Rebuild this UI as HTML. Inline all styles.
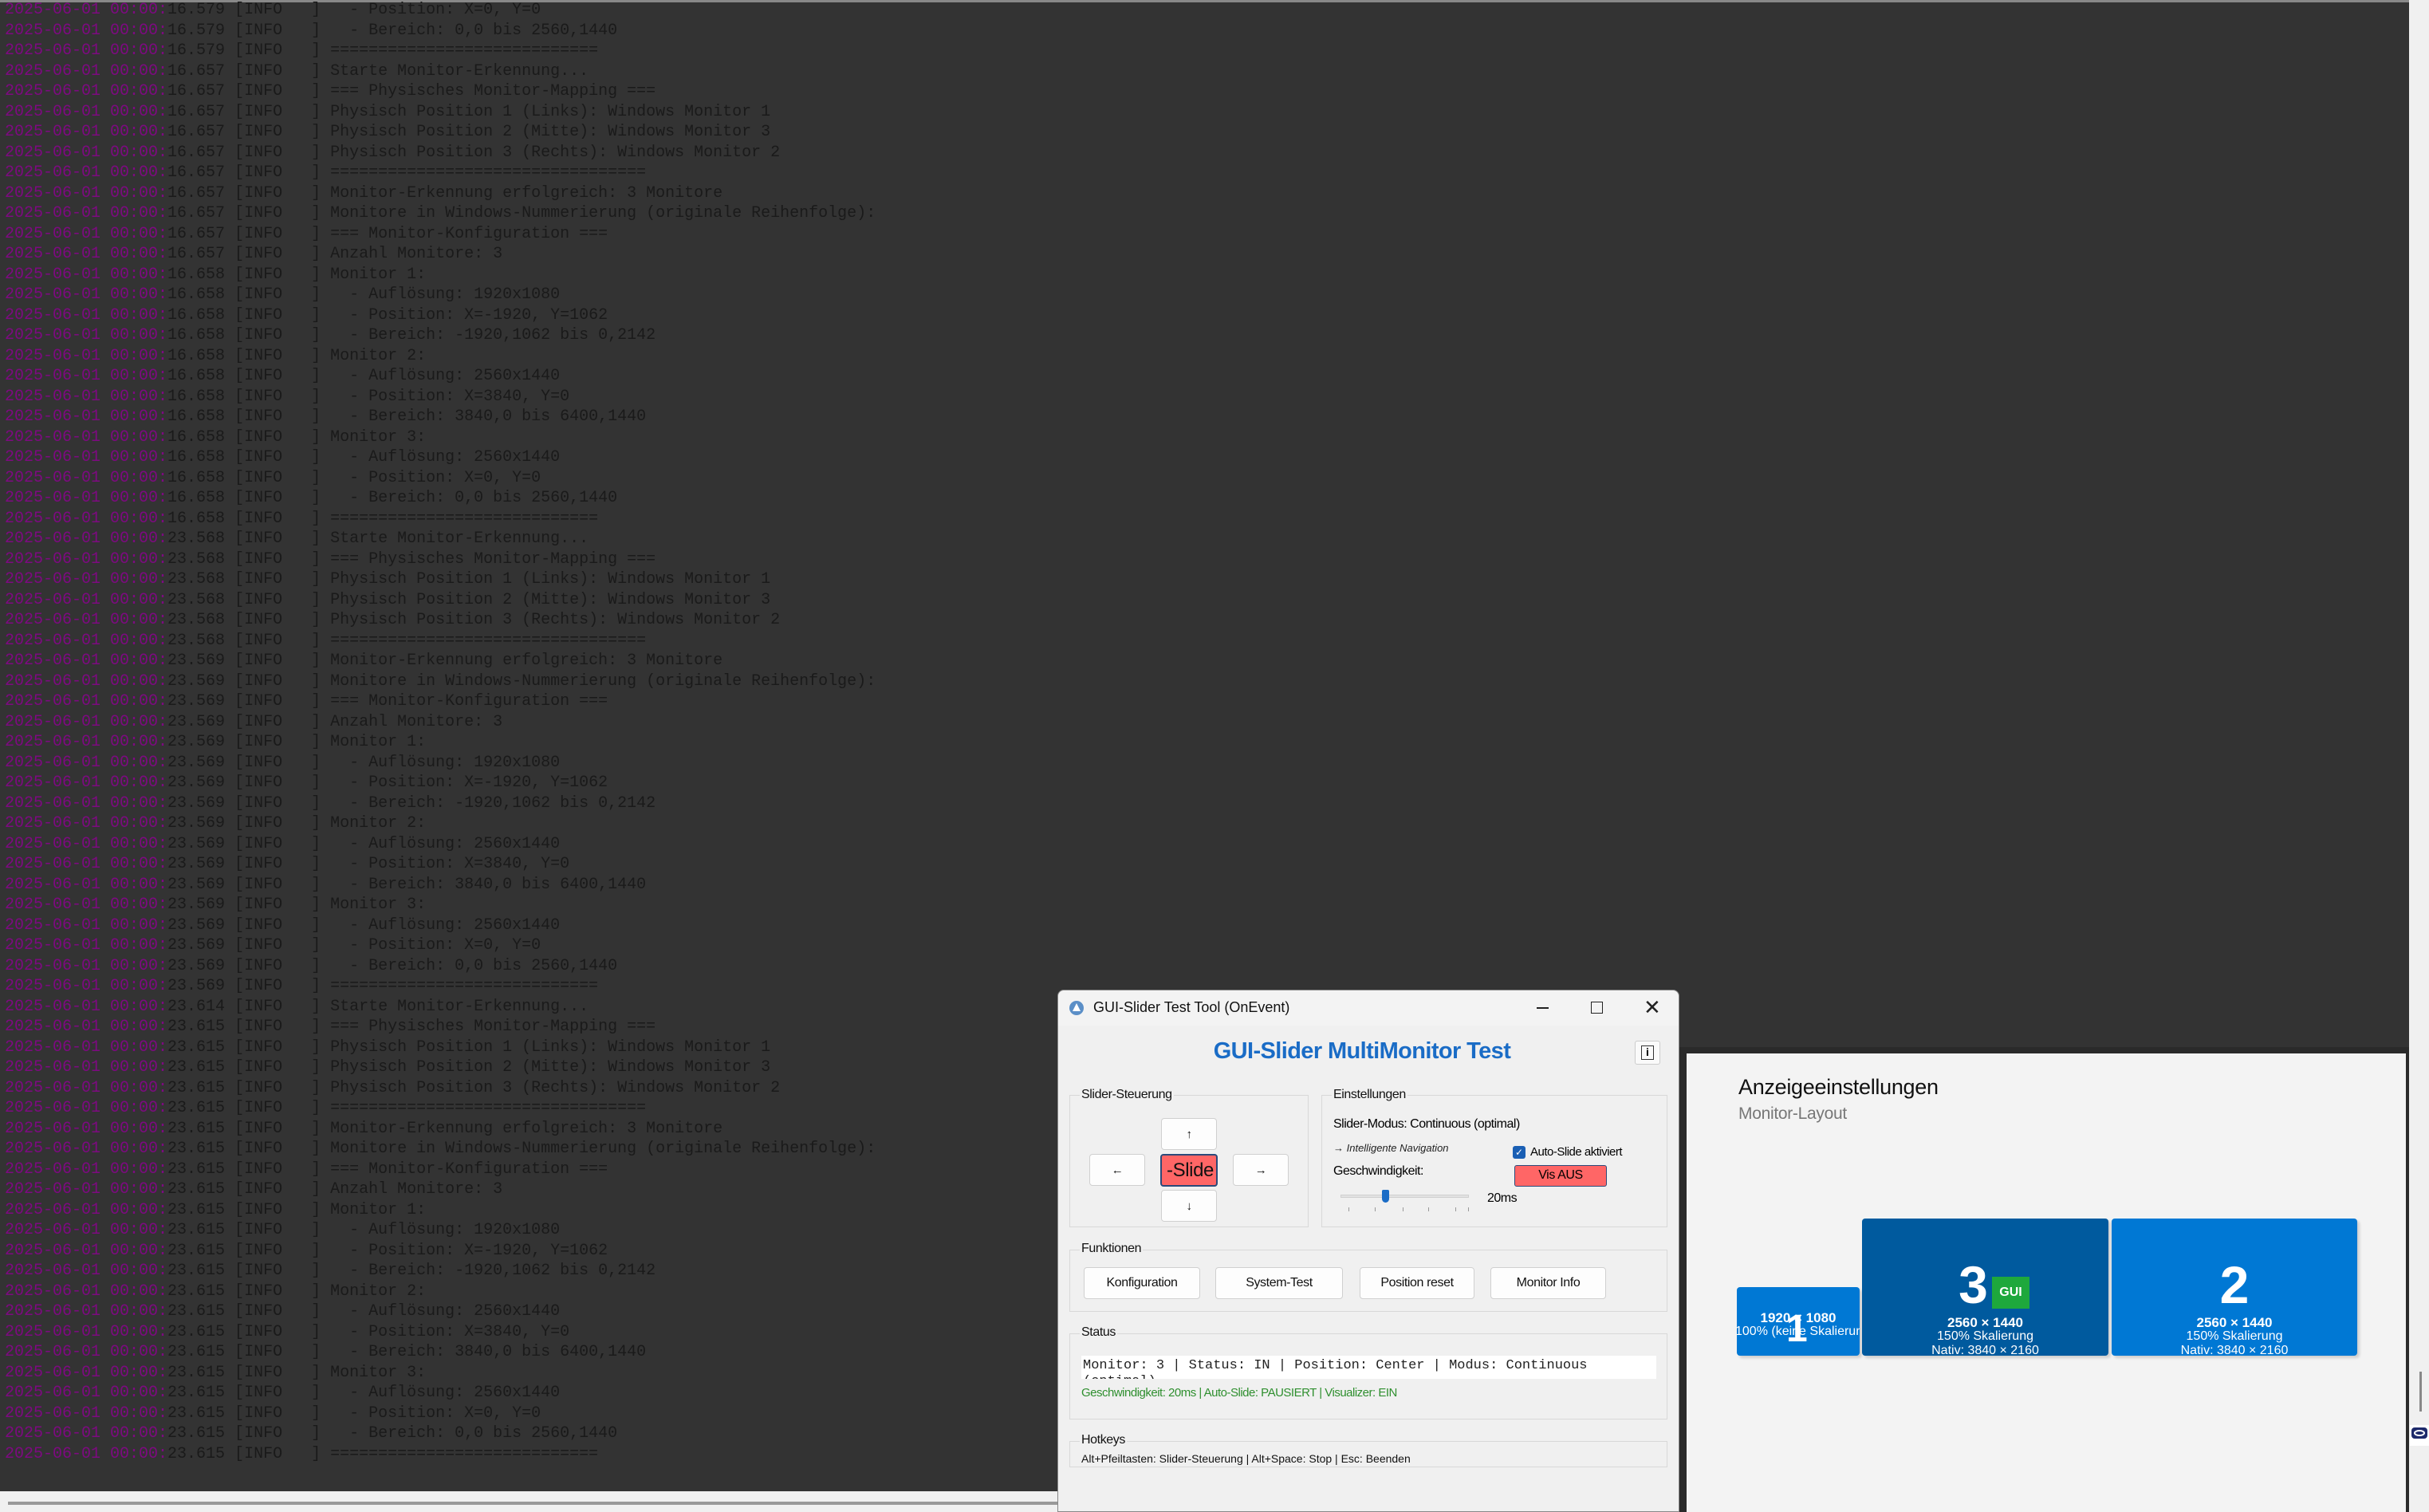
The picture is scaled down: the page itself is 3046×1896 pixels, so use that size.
<!DOCTYPE html>
<html><head><meta charset="utf-8"><style>
*{margin:0;padding:0;box-sizing:border-box}
body{width:3046px;height:1896px;background:#333;position:relative;overflow:hidden;font-family:"Liberation Sans",sans-serif}
#log{position:absolute;left:6px;top:0;font-family:"Liberation Mono",monospace;font-size:20px;line-height:25.5px;color:#1a1a1a;white-space:pre}
#log b{font-weight:normal;color:#7d0a80}
.abs{position:absolute}
.dlg{left:1326px;top:1241px;width:780px;height:655px;background:#f0f0f0;border:1px solid #888;border-radius:8px 8px 0 0}
.grp{position:absolute;border:1px solid #d8d8d8}
.lbl{position:absolute;font-size:16px;color:#111;background:#f0f0f0;padding:0 2px;letter-spacing:-0.4px}
.btn{position:absolute;background:#fdfdfd;border:1px solid #d0d0d0;border-radius:4px;font-size:16px;display:flex;align-items:center;justify-content:center;color:#111;letter-spacing:-0.4px}
.mon{position:absolute;background:#0078d4;border-radius:4px;color:#fff;text-align:center;overflow:hidden;box-shadow:3px 3px 3px rgba(0,0,0,.15)}
.mon .n{font-weight:bold;font-size:66px;line-height:66px}
.mon .r{font-weight:bold;font-size:17px;line-height:17px}
.mon .s{font-size:16px;line-height:18px}
</style></head><body>
<div class="abs" style="left:0;top:0;width:3046px;height:3px;background:#888"></div>
<div id="log"><b>2025-06-01 00:00:</b>16.579 [INFO   ]   - Position: X=0, Y=0
<b>2025-06-01 00:00:</b>16.579 [INFO   ]   - Bereich: 0,0 bis 2560,1440
<b>2025-06-01 00:00:</b>16.579 [INFO   ] ============================
<b>2025-06-01 00:00:</b>16.657 [INFO   ] Starte Monitor-Erkennung...
<b>2025-06-01 00:00:</b>16.657 [INFO   ] === Physisches Monitor-Mapping ===
<b>2025-06-01 00:00:</b>16.657 [INFO   ] Physisch Position 1 (Links): Windows Monitor 1
<b>2025-06-01 00:00:</b>16.657 [INFO   ] Physisch Position 2 (Mitte): Windows Monitor 3
<b>2025-06-01 00:00:</b>16.657 [INFO   ] Physisch Position 3 (Rechts): Windows Monitor 2
<b>2025-06-01 00:00:</b>16.657 [INFO   ] =================================
<b>2025-06-01 00:00:</b>16.657 [INFO   ] Monitor-Erkennung erfolgreich: 3 Monitore
<b>2025-06-01 00:00:</b>16.657 [INFO   ] Monitore in Windows-Nummerierung (originale Reihenfolge):
<b>2025-06-01 00:00:</b>16.657 [INFO   ] === Monitor-Konfiguration ===
<b>2025-06-01 00:00:</b>16.657 [INFO   ] Anzahl Monitore: 3
<b>2025-06-01 00:00:</b>16.658 [INFO   ] Monitor 1:
<b>2025-06-01 00:00:</b>16.658 [INFO   ]   - Auflösung: 1920x1080
<b>2025-06-01 00:00:</b>16.658 [INFO   ]   - Position: X=-1920, Y=1062
<b>2025-06-01 00:00:</b>16.658 [INFO   ]   - Bereich: -1920,1062 bis 0,2142
<b>2025-06-01 00:00:</b>16.658 [INFO   ] Monitor 2:
<b>2025-06-01 00:00:</b>16.658 [INFO   ]   - Auflösung: 2560x1440
<b>2025-06-01 00:00:</b>16.658 [INFO   ]   - Position: X=3840, Y=0
<b>2025-06-01 00:00:</b>16.658 [INFO   ]   - Bereich: 3840,0 bis 6400,1440
<b>2025-06-01 00:00:</b>16.658 [INFO   ] Monitor 3:
<b>2025-06-01 00:00:</b>16.658 [INFO   ]   - Auflösung: 2560x1440
<b>2025-06-01 00:00:</b>16.658 [INFO   ]   - Position: X=0, Y=0
<b>2025-06-01 00:00:</b>16.658 [INFO   ]   - Bereich: 0,0 bis 2560,1440
<b>2025-06-01 00:00:</b>16.658 [INFO   ] ============================
<b>2025-06-01 00:00:</b>23.568 [INFO   ] Starte Monitor-Erkennung...
<b>2025-06-01 00:00:</b>23.568 [INFO   ] === Physisches Monitor-Mapping ===
<b>2025-06-01 00:00:</b>23.568 [INFO   ] Physisch Position 1 (Links): Windows Monitor 1
<b>2025-06-01 00:00:</b>23.568 [INFO   ] Physisch Position 2 (Mitte): Windows Monitor 3
<b>2025-06-01 00:00:</b>23.568 [INFO   ] Physisch Position 3 (Rechts): Windows Monitor 2
<b>2025-06-01 00:00:</b>23.568 [INFO   ] =================================
<b>2025-06-01 00:00:</b>23.569 [INFO   ] Monitor-Erkennung erfolgreich: 3 Monitore
<b>2025-06-01 00:00:</b>23.569 [INFO   ] Monitore in Windows-Nummerierung (originale Reihenfolge):
<b>2025-06-01 00:00:</b>23.569 [INFO   ] === Monitor-Konfiguration ===
<b>2025-06-01 00:00:</b>23.569 [INFO   ] Anzahl Monitore: 3
<b>2025-06-01 00:00:</b>23.569 [INFO   ] Monitor 1:
<b>2025-06-01 00:00:</b>23.569 [INFO   ]   - Auflösung: 1920x1080
<b>2025-06-01 00:00:</b>23.569 [INFO   ]   - Position: X=-1920, Y=1062
<b>2025-06-01 00:00:</b>23.569 [INFO   ]   - Bereich: -1920,1062 bis 0,2142
<b>2025-06-01 00:00:</b>23.569 [INFO   ] Monitor 2:
<b>2025-06-01 00:00:</b>23.569 [INFO   ]   - Auflösung: 2560x1440
<b>2025-06-01 00:00:</b>23.569 [INFO   ]   - Position: X=3840, Y=0
<b>2025-06-01 00:00:</b>23.569 [INFO   ]   - Bereich: 3840,0 bis 6400,1440
<b>2025-06-01 00:00:</b>23.569 [INFO   ] Monitor 3:
<b>2025-06-01 00:00:</b>23.569 [INFO   ]   - Auflösung: 2560x1440
<b>2025-06-01 00:00:</b>23.569 [INFO   ]   - Position: X=0, Y=0
<b>2025-06-01 00:00:</b>23.569 [INFO   ]   - Bereich: 0,0 bis 2560,1440
<b>2025-06-01 00:00:</b>23.569 [INFO   ] ============================
<b>2025-06-01 00:00:</b>23.614 [INFO   ] Starte Monitor-Erkennung...
<b>2025-06-01 00:00:</b>23.615 [INFO   ] === Physisches Monitor-Mapping ===
<b>2025-06-01 00:00:</b>23.615 [INFO   ] Physisch Position 1 (Links): Windows Monitor 1
<b>2025-06-01 00:00:</b>23.615 [INFO   ] Physisch Position 2 (Mitte): Windows Monitor 3
<b>2025-06-01 00:00:</b>23.615 [INFO   ] Physisch Position 3 (Rechts): Windows Monitor 2
<b>2025-06-01 00:00:</b>23.615 [INFO   ] =================================
<b>2025-06-01 00:00:</b>23.615 [INFO   ] Monitor-Erkennung erfolgreich: 3 Monitore
<b>2025-06-01 00:00:</b>23.615 [INFO   ] Monitore in Windows-Nummerierung (originale Reihenfolge):
<b>2025-06-01 00:00:</b>23.615 [INFO   ] === Monitor-Konfiguration ===
<b>2025-06-01 00:00:</b>23.615 [INFO   ] Anzahl Monitore: 3
<b>2025-06-01 00:00:</b>23.615 [INFO   ] Monitor 1:
<b>2025-06-01 00:00:</b>23.615 [INFO   ]   - Auflösung: 1920x1080
<b>2025-06-01 00:00:</b>23.615 [INFO   ]   - Position: X=-1920, Y=1062
<b>2025-06-01 00:00:</b>23.615 [INFO   ]   - Bereich: -1920,1062 bis 0,2142
<b>2025-06-01 00:00:</b>23.615 [INFO   ] Monitor 2:
<b>2025-06-01 00:00:</b>23.615 [INFO   ]   - Auflösung: 2560x1440
<b>2025-06-01 00:00:</b>23.615 [INFO   ]   - Position: X=3840, Y=0
<b>2025-06-01 00:00:</b>23.615 [INFO   ]   - Bereich: 3840,0 bis 6400,1440
<b>2025-06-01 00:00:</b>23.615 [INFO   ] Monitor 3:
<b>2025-06-01 00:00:</b>23.615 [INFO   ]   - Auflösung: 2560x1440
<b>2025-06-01 00:00:</b>23.615 [INFO   ]   - Position: X=0, Y=0
<b>2025-06-01 00:00:</b>23.615 [INFO   ]   - Bereich: 0,0 bis 2560,1440
<b>2025-06-01 00:00:</b>23.615 [INFO   ] ============================</div>

<div class="abs" style="left:0;top:1870px;width:1330px;height:26px;background:#f0f0f0"></div>
<div class="abs" style="left:10px;top:1883px;width:1320px;height:4px;background:#999"></div>
<div class="abs" style="left:3021px;top:0;width:25px;height:1896px;background:#f0f0f0"></div>
<div class="abs" style="left:3034px;top:1720px;width:3px;height:50px;background:#888"></div>
<div class="abs" style="left:3022px;top:1787px;width:24px;height:26px;background:#fff"></div>
<div class="abs" style="left:3024px;top:1790px;width:20px;height:14px;background:#1d2a6b;border-radius:4px"></div>
<div class="abs" style="left:3027px;top:1793px;width:14px;height:8px;border:2px solid #fff;border-radius:50%"></div>

<div class="abs" style="left:2106px;top:1313px;width:915px;height:583px;background:#2a2a2a"></div>
<div class="abs" style="left:2115px;top:1321px;width:902px;height:575px;background:#f3f3f3"></div>
<div class="abs" style="left:2180px;top:1348px;font-size:27px;color:#111;letter-spacing:-0.3px">Anzeigeeinstellungen</div>
<div class="abs" style="left:2180px;top:1385px;font-size:21px;color:#777;letter-spacing:-0.3px">Monitor-Layout</div>
<div class="mon" style="left:2178px;top:1614px;width:154px;height:86px">
  <div class="r" style="margin-top:30px">1920 × 1080</div>
  <div class="s" style="white-space:nowrap;margin-left:-2px;text-align:left">100% (keine Skalierung)</div>
  <div class="abs n" style="left:62px;top:20px;font-size:48px">1</div>
</div>
<div class="mon" style="left:2335px;top:1528px;width:309px;height:172px;background:#005a9e">
  <div class="n" style="margin-top:50px;margin-right:30px">3</div>
  <div class="r" style="margin-top:6px">2560 × 1440</div>
  <div class="s">150% Skalierung</div>
  <div class="s">Nativ: 3840 × 2160</div>
  <div class="abs" style="left:163px;top:73px;width:47px;height:40px;background:#1ea83c;font-size:16px;font-weight:bold;line-height:40px">GUI</div>
</div>
<div class="mon" style="left:2648px;top:1528px;width:308px;height:172px">
  <div class="n" style="margin-top:50px">2</div>
  <div class="r" style="margin-top:6px">2560 × 1440</div>
  <div class="s">150% Skalierung</div>
  <div class="s">Nativ: 3840 × 2160</div>
</div>

<div class="abs dlg">
  <div class="abs" style="left:0;top:0;width:778px;height:44px;background:#f3f3f3;border-radius:8px 8px 0 0"></div>
  <div class="abs" style="left:14px;top:13px;width:18px;height:18px;border-radius:50%;background:#5b8fc7"></div>
  <div class="abs" style="left:18px;top:16px;width:0;height:0;border-left:5px solid transparent;border-right:5px solid transparent;border-bottom:10px solid #fff"></div>
  <div class="abs" style="left:44px;top:11px;font-size:18px;color:#111">GUI-Slider Test Tool (OnEvent)</div>
  <div class="abs" style="left:600px;top:21px;width:15px;height:1.5px;background:#222"></div>
  <div class="abs" style="left:668px;top:14px;width:15px;height:15px;border:1.5px solid #222"></div>
  <div class="abs" style="left:734px;top:8px;font-size:26px;color:#222;line-height:26px">✕</div>
  <div class="abs" style="left:0;top:60px;width:778px;text-align:center;font-size:29px;font-weight:bold;color:#1a6cc6;letter-spacing:-0.6px;padding-right:16px">GUI-Slider MultiMonitor Test</div>
  <div class="abs" style="left:723px;top:63px;width:32px;height:30px;background:#fafafa;border:1px solid #ccc;border-radius:3px"></div>
  <div class="abs" style="left:731px;top:69px;width:16px;height:18px;border:1.5px solid #333;font-size:14px;font-weight:bold;text-align:center;line-height:15px">i</div>

  <div class="grp" style="left:14px;top:131px;width:300px;height:166px"></div>
  <div class="lbl" style="left:27px;top:122px">Slider-Steuerung</div>
  <div class="btn" style="left:129px;top:160px;width:70px;height:40px;font-size:15px">↑</div>
  <div class="btn" style="left:39px;top:205px;width:70px;height:40px;font-size:15px">←</div>
  <div class="btn" style="left:128px;top:205px;width:72px;height:41px;background:#ff6666;border:2px solid #2b4a7a;font-size:24px;overflow:hidden;justify-content:flex-end;padding-right:3px">-Slide</div>
  <div class="btn" style="left:219px;top:205px;width:70px;height:40px;font-size:15px">→</div>
  <div class="btn" style="left:129px;top:250px;width:70px;height:40px;font-size:15px">↓</div>

  <div class="grp" style="left:330px;top:131px;width:434px;height:166px"></div>
  <div class="lbl" style="left:343px;top:122px">Einstellungen</div>
  <div class="abs" style="left:345px;top:159px;font-size:16px;letter-spacing:-0.5px">Slider-Modus: Continuous (optimal)</div>
  <div class="abs" style="left:345px;top:190px;font-size:13px;font-style:italic;color:#222">→ Intelligente Navigation</div>
  <div class="abs" style="left:570px;top:195px;width:16px;height:16px;background:#1a5fb4;border-radius:3px;color:#fff;font-size:12px;text-align:center;line-height:16px">✓</div>
  <div class="abs" style="left:592px;top:194px;font-size:15px;letter-spacing:-0.5px">Auto-Slide aktiviert</div>
  <div class="abs" style="left:345px;top:218px;font-size:16px;letter-spacing:-0.5px">Geschwindigkeit:</div>
  <div class="abs" style="left:572px;top:219px;width:116px;height:27px;background:#ff6666;border:1.5px solid #2b4a7a;border-radius:3px;font-size:16px;text-align:center;line-height:24px;letter-spacing:-0.4px">Vis AUS</div>
  <div class="abs" style="left:354px;top:256px;width:161px;height:4px;background:#e2e2e2;border:1px solid #d0d0d0"></div>
  <div class="abs" style="left:406px;top:250px;width:9px;height:16px;background:#1a6cc6;border-radius:2px 2px 5px 5px"></div>
  <div class="abs" style="left:538px;top:252px;font-size:16px;letter-spacing:-0.5px">20ms</div>
  <div class="abs" style="left:364px;top:272px;width:1px;height:5px;background:#999;box-shadow:33px 0 #999,68px 0 #999,100px 0 #999,134px 0 #999,150px 0 #999"></div>

  <div class="grp" style="left:14px;top:325px;width:750px;height:78px"></div>
  <div class="lbl" style="left:27px;top:315px">Funktionen</div>
  <div class="btn" style="left:32px;top:347px;width:146px;height:40px">Konfiguration</div>
  <div class="btn" style="left:197px;top:347px;width:160px;height:40px">System-Test</div>
  <div class="btn" style="left:378px;top:347px;width:144px;height:40px">Position reset</div>
  <div class="btn" style="left:542px;top:347px;width:145px;height:40px">Monitor Info</div>

  <div class="grp" style="left:14px;top:430px;width:750px;height:108px"></div>
  <div class="lbl" style="left:27px;top:420px">Status</div>
  <div class="abs" style="left:29px;top:458px;width:721px;height:29px;background:#fff;overflow:hidden;font-family:'Liberation Mono',monospace;font-size:17px;line-height:20px;padding:3px 0 0 2px;color:#222;white-space:pre">Monitor: 3 | Status: IN | Position: Center | Modus: Continuous
(optimal)</div>
  <div class="abs" style="left:29px;top:496px;font-size:15px;color:#2f8f2f;letter-spacing:-0.5px">Geschwindigkeit: 20ms | Auto-Slide: PAUSIERT | Visualizer: EIN</div>

  <div class="grp" style="left:14px;top:565px;width:750px;height:33px"></div>
  <div class="lbl" style="left:27px;top:555px">Hotkeys</div>
  <div class="abs" style="left:29px;top:579px;font-size:14px;color:#111">Alt+Pfeiltasten: Slider-Steuerung | Alt+Space: Stop | Esc: Beenden</div>
</div>
</body></html>
